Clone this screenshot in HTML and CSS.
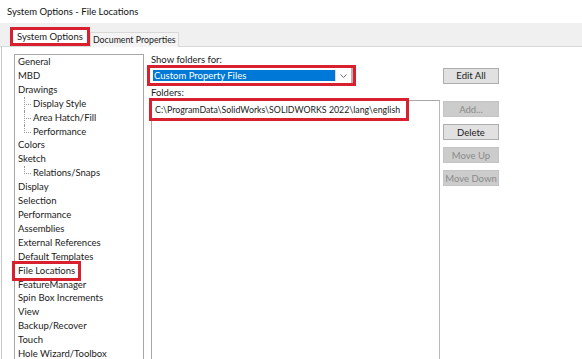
FILE: index.html
```html
<!DOCTYPE html>
<html lang="en">
<head>
  <meta charset="UTF-8">
  <meta name="viewport" content="width=device-width, initial-scale=1.0">
  <title>System Options - File Locations</title>
  <link rel="stylesheet" href="styles.css">
</head>
<body>
  <div class="title">System Options - File Locations</div>

  <div class="tabs">
    <div class="tab tab-active">System Options</div>
    <div class="tab">Document Properties</div>
  </div>

  <div class="page">
    <ul class="tree">
      <li>General</li>
      <li>MBD</li>
      <li>Drawings
        <ul class="sub">
          <li>Display Style</li>
          <li>Area Hatch/Fill</li>
          <li>Performance</li>
        </ul>
      </li>
      <li>Colors</li>
      <li>Sketch
        <ul class="sub">
          <li>Relations/Snaps</li>
        </ul>
      </li>
      <li>Display</li>
      <li>Selection</li>
      <li>Performance</li>
      <li>Assemblies</li>
      <li>External References</li>
      <li>Default Templates</li>
      <li><span class="marked">File Locations</span></li>
      <li>FeatureManager</li>
      <li>Spin Box Increments</li>
      <li>View</li>
      <li>Backup/Recover</li>
      <li>Touch</li>
      <li>Hole Wizard/Toolbox</li>
    </ul>

    <div class="panel">
      <div class="label label-top">Show folders for:</div>
      <div></div>

      <div class="select-mark">
        <div class="select">
          <span class="select-value">Custom Property Files</span>
          <span class="select-arrow">
            <svg width="7" height="4" viewBox="0 0 7 4">
              <polyline points="0.5,0.5 3.5,3.5 6.5,0.5" fill="none" stroke="#707070" stroke-width="1"/>
            </svg>
          </span>
        </div>
      </div>
      <button class="btn">Edit All</button>

      <div class="label">Folders:</div>
      <div></div>

      <div class="listbox">
        <div class="list-item">C:\ProgramData\SolidWorks\SOLIDWORKS 2022\lang\english</div>
      </div>
      <div class="btn-stack">
        <button class="btn" disabled>Add...</button>
        <button class="btn">Delete</button>
        <button class="btn" disabled>Move Up</button>
        <button class="btn" disabled>Move Down</button>
      </div>
    </div>
  </div>
</body>
</html>
```

FILE: styles.css
```css
html, body {
  margin: 0;
  height: 100%;
  overflow: hidden;
}
body {
  font-family: Lato, "Noto Sans", sans-serif;
  font-size: 9.5px;
  color: #1a1a1a;
  background: #fff;
}
.title {
  height: 23px;
  line-height: 23px;
  padding-left: 7px;
  font-size: 9.5px;
  color: #111;
}
.tabs {
  height: 24px;
  background: #f0f0f0;
  border-bottom: 1px solid #d9d9d9;
  box-sizing: border-box;
  display: flex;
  align-items: flex-end;
  padding-left: 10px;
}
.tab {
  height: 14px;
  line-height: 14px;
  padding: 0 2px;
  font-size: 8.8px;
  border: 1px solid #d9d9d9;
  border-bottom: none;
  background: #f4f4f4;
  margin-bottom: -1px;
}
.tab-active {
  height: 13px;
  line-height: 13px;
  padding: 0 4px;
  font-size: 9.5px;
  border: 3px solid #d9202e;
  background: #fff;
  margin-bottom: 0;
}
.page {
  display: flex;
  margin-left: 1px;
  border-left: 1px solid #c8c8c8;
  padding: 7px 0 0 12px;
  height: 320px;
}
.tree {
  list-style: none;
  margin: 0;
  padding: 0;
  width: 128px;
  height: 320px;
  border: 1px solid #a8a8a8;
  flex-shrink: 0;
}
.tree li {
  line-height: 13.9px;
  padding-left: 3px;
  white-space: nowrap;
}
.sub {
  list-style: none;
  margin: 0 0 0 -3px;
  padding: 0;
}
.tree .sub li {
  position: relative;
  padding-left: 18px;
}
.tree .sub li::before {
  content: "";
  position: absolute;
  left: 9px;
  top: 0;
  width: 6px;
  height: 7px;
  border-left: 1px dotted #9a9a9a;
  border-bottom: 1px dotted #9a9a9a;
}
.tree .sub li:not(:last-child)::after {
  content: "";
  position: absolute;
  left: 9px;
  top: 7px;
  bottom: 0;
  border-left: 1px dotted #9a9a9a;
}
.marked {
  display: inline-block;
  margin-left: -3px;
  padding: 0 3px;
  outline: 3px solid #d9202e;
  outline-offset: 0;
}
.panel {
  margin-left: 7px;
  padding-top: 1px;
  display: grid;
  grid-template-columns: 289px 56px;
  grid-template-rows: 10px 21px 14px 1fr;
  column-gap: 3px;
  align-items: center;
}
.label {
  line-height: 10px;
  white-space: nowrap;
}
.select-mark {
  margin-left: -4px;
  width: 203px;
  height: 15px;
  border: 3px solid #d9202e;
  display: flex;
}
.select {
  flex: 1;
  display: flex;
  background: #fff;
  border-right: 2px solid #b4b4b4;
  padding: 2px 0 2px 3px;
}
.select-value {
  flex: 1;
  background: #0078d7;
  color: #fff;
  line-height: 11px;
  padding-left: 1px;
  white-space: nowrap;
}
.select-arrow {
  width: 15px;
  display: flex;
  align-items: center;
  justify-content: center;
  border-left: 1px solid #d8d8d8;
}
.btn {
  width: 56px;
  height: 16px;
  padding: 0;
  font: inherit;
  color: #1a1a1a;
  background: #e1e1e1;
  border: 1px solid #adadad;
}
.btn:disabled {
  color: #8a8a8a;
  background: #cccccc;
  border-color: #c4c4c4;
}
.listbox {
  align-self: start;
  height: 270px;
  border: 1px solid #a8a8a8;
  border-right-color: #b8b8b8;
}
.list-item {
  display: inline-block;
  line-height: 17px;
  padding: 0 6px 0 3px;
  font-size: 8.8px;
  white-space: nowrap;
  outline: 3px solid #d9202e;
}
.btn-stack {
  align-self: start;
  margin-top: 1px;
  display: flex;
  flex-direction: column;
  gap: 7px;
}
```
